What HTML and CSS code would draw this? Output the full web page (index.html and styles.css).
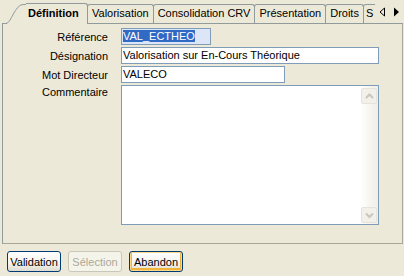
FILE: index.html
```html
<!DOCTYPE html>
<html lang="fr">

<head>
    <meta charset="utf-8">
    <title>Définition</title>
    <link rel="stylesheet" href="styles.css">
</head>

<body>
    <nav class="onglets">
        <div class="liste">
            <div class="onglet actif">
                <svg class="biais" width="24" height="21" viewBox="0 0 24 21">
                    <path d="M5 21 V20 C10 20 13 1 21 1 H24 V21 Z" fill="#ece9d8"/>
                    <path d="M0 20.5 H4 C9 20.5 13 1.5 21 1.5 H24" fill="none" stroke="#919b9c"/>
                </svg>
                <span>Définition</span>
            </div>
            <div class="onglet">Valorisation</div>
            <div class="onglet">Consolidation CRV</div>
            <div class="onglet">Présentation</div>
            <div class="onglet">Droits</div>
            <div class="onglet dernier">S</div>
        </div>
        <div class="fleches">
            <svg width="7" height="10" viewBox="0 0 7 10">
                <path d="M5.5 1 L1 5 L5.5 9 Z" fill="none" stroke="#000"/>
            </svg>
            <svg width="7" height="10" viewBox="0 0 7 10">
                <path d="M1 0.5 L6 5 L1 9.5 Z" fill="#000"/>
            </svg>
        </div>
    </nav>

    <section class="panneau">
        <div class="fiche">
            <label>Référence</label>
            <div class="champ ref"><span class="selection">VAL_ECTHEO</span></div>

            <label>Désignation</label>
            <div class="champ desig">Valorisation sur En-Cours Théorique</div>

            <label>Mot Directeur</label>
            <div class="champ mot">VALECO</div>

            <label class="haut">Commentaire</label>
            <div class="champ comment">
                <div class="defil">
                    <div class="bouton-defil">
                        <svg width="13" height="14" viewBox="0 0 13 14">
                            <polyline points="3,9 6.5,5.5 10,9" fill="none" stroke="#c9c7bc" stroke-width="2"/>
                        </svg>
                    </div>
                    <div class="piste"></div>
                    <div class="bouton-defil">
                        <svg width="13" height="14" viewBox="0 0 13 14">
                            <polyline points="3,5.5 6.5,9 10,5.5" fill="none" stroke="#c9c7bc" stroke-width="2"/>
                        </svg>
                    </div>
                </div>
            </div>
        </div>
    </section>

    <footer class="actions">
        <button>Validation</button>
        <button disabled>Sélection</button>
        <button class="focus">Abandon</button>
    </footer>
</body>

</html>
```

FILE: styles.css
```css
body {
    margin: 0;
    width: 404px;
    height: 276px;
    overflow: hidden;
    background: #ece9d8;
    font: 11px "Liberation Sans", Arial, sans-serif;
    color: #000;
}

.onglets {
    display: flex;
    height: 24px;
    padding-left: 2px;
    position: relative;
    z-index: 1;
}

.liste {
    flex: 1;
    display: flex;
    align-items: flex-end;
    overflow: hidden;
    height: 24px;
}

.onglet {
    flex: none;
    height: 19px;
    box-sizing: border-box;
    margin: 0 0 1px -1px;
    padding: 0 4px;
    border: 1px solid #919b9c;
    border-bottom: 0;
    border-radius: 3px 3px 0 0;
    line-height: 17px;
    white-space: nowrap;
}

.onglet.dernier {
    padding: 0 6px 0 2px;
}

.onglet.actif {
    display: flex;
    height: 21px;
    margin: 0;
    padding: 0;
    border: 0;
    border-radius: 0;
}

.actif span {
    width: 62px;
    box-sizing: border-box;
    padding-left: 2px;
    border-top: 1px solid #919b9c;
    border-right: 1px solid #919b9c;
    border-radius: 0 3px 0 0;
    background: #ece9d8;
    font-weight: bold;
    line-height: 18px;
}

.fleches {
    flex: none;
    width: 29px;
    height: 23px;
    display: flex;
    align-items: center;
    justify-content: center;
    gap: 7px;
    background: #ece9d8;
}

.panneau {
    margin: -1px 1px 0 2px;
    height: 221px;
    box-sizing: border-box;
    border: 1px solid #919b9c;
    border-right-color: #a7a69a;
    border-bottom-color: #a7a69a;
}

.fiche {
    display: grid;
    grid-template-columns: 105px auto;
    column-gap: 13px;
    row-gap: 2px;
    padding-top: 4px;
    justify-items: start;
    align-items: center;
}

.fiche label {
    justify-self: end;
}

.fiche label.haut {
    align-self: start;
    padding-top: 1px;
}

.champ {
    height: 17px;
    box-sizing: border-box;
    border: 1px solid #7f9db9;
    background: #fff;
    padding: 0 1px;
    line-height: 15px;
    white-space: nowrap;
    overflow: hidden;
}

.ref {
    width: 90px;
    background: #dde6f7;
}

.selection {
    background: #316ac5;
    color: #fff;
}

.desig {
    width: 258px;
}

.mot {
    width: 164px;
}

.comment {
    width: 258px;
    height: 140px;
    padding: 0;
    display: flex;
    justify-content: flex-end;
}

.defil {
    width: 17px;
    box-sizing: border-box;
    padding: 2px 1px 1px 0;
    display: flex;
    flex-direction: column;
    background: linear-gradient(to right, #fefefb, #efeee7);
}

.piste {
    flex: 1;
}

.bouton-defil {
    height: 16px;
    box-sizing: border-box;
    border: 1px solid #e6e4da;
    border-radius: 2px;
    background: #f1f0ea;
    display: flex;
    align-items: center;
    justify-content: center;
}

.actions {
    display: flex;
    gap: 7px;
    padding: 7px 0 0 7px;
}

button {
    width: 54px;
    height: 21px;
    padding: 0;
    border: 1px solid #003c74;
    border-radius: 3px;
    background: linear-gradient(to bottom, #ffffff 0%, #f4f3ee 60%, #dedbcf 100%);
    font: 11px "Liberation Sans", Arial, sans-serif;
    color: #000;
}

button:disabled {
    border-color: #c9c7ba;
    background: #f5f4ea;
    color: #aca899;
}

button.focus {
    box-shadow: inset 0 0 0 1px #fcd889, inset 0 -1px 0 2px #f0b43a;
}
```
